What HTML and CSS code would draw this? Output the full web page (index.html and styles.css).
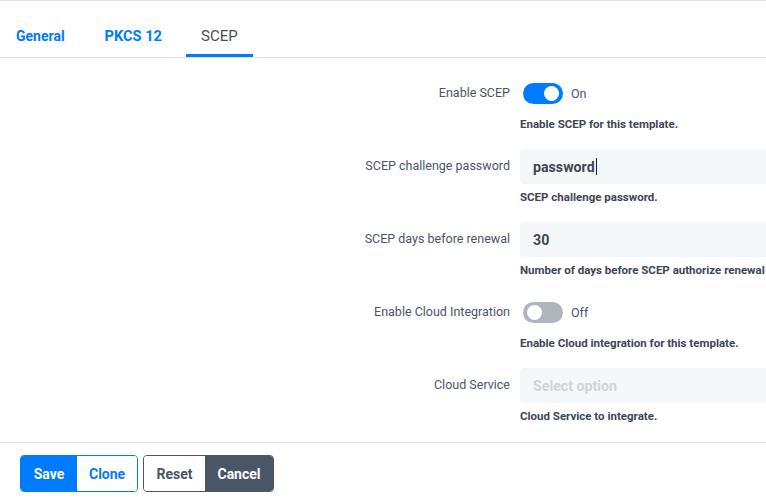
FILE: index.html
```html
<!DOCTYPE html>
<html>
<head>
<meta charset="utf-8">
<link rel="stylesheet" href="styles.css">
</head>
<body>
<div class="page">
  <nav class="tabs">
    <a class="tab">General</a>
    <a class="tab">PKCS 12</a>
    <a class="tab active">SCEP</a>
  </nav>
  <form class="form">
    <div class="field">
      <label class="label">Enable SCEP</label>
      <div class="control">
        <div class="row">
          <span class="switch on"><span class="knob"></span></span>
          <span class="state">On</span>
        </div>
        <div class="help">Enable SCEP for this template.</div>
      </div>
    </div>
    <div class="field">
      <label class="label">SCEP challenge password</label>
      <div class="control">
        <div class="input"><span class="value">password</span><span class="caret"></span></div>
        <div class="help">SCEP challenge password.</div>
      </div>
    </div>
    <div class="field">
      <label class="label">SCEP days before renewal</label>
      <div class="control">
        <div class="input"><span class="value">30</span></div>
        <div class="help">Number of days before SCEP authorize renewal</div>
      </div>
    </div>
    <div class="field">
      <label class="label">Enable Cloud Integration</label>
      <div class="control">
        <div class="row">
          <span class="switch"><span class="knob"></span></span>
          <span class="state">Off</span>
        </div>
        <div class="help">Enable Cloud integration for this template.</div>
      </div>
    </div>
    <div class="field">
      <label class="label">Cloud Service</label>
      <div class="control">
        <div class="input"><span class="placeholder">Select option</span></div>
        <div class="help">Cloud Service to integrate.</div>
      </div>
    </div>
  </form>
  <footer class="footer">
    <div class="group primary">
      <button class="btn save">Save</button>
      <button class="btn clone">Clone</button>
    </div>
    <div class="group dark">
      <button class="btn reset">Reset</button>
      <button class="btn cancel">Cancel</button>
    </div>
  </footer>
</div>
</body>
</html>
```
FILE: styles.css
```css
* { box-sizing: border-box; }
html, body { margin: 0; padding: 0; background: #fff; }
body { font-family: Roboto, "Liberation Sans", sans-serif; color: #4a5568; overflow: hidden; }
.page { width: 766px; border-top: 1px solid #e2e4e6; }

.tabs { display: flex; padding-left: 1px; border-bottom: 1px solid #dfe1e3; height: 57px; }
.tab { display: block; padding: 26px 15px 9px; line-height: 18px; font-size: 14px; font-weight: 700; color: #007bff; border-bottom: 3px solid transparent; height: 56px; }
.tab:nth-child(2) { margin-left: 10px; font-size: 14.6px; }
.tab.active { margin-left: 9px; font-size: 15px; font-weight: 400; color: #495057; border-bottom-color: #007bff; }

.form { padding-top: 18px; }
.field { display: grid; grid-template-columns: 510px 1fr; column-gap: 10px; height: 73px; }
.label { font-size: 12.5px; line-height: 34px; text-align: right; color: #4a5568; }
.control { min-width: 0; }
.row { height: 35px; display: flex; align-items: center; padding-left: 3px; padding-bottom: 1px; }
.switch { width: 40px; height: 21px; border-radius: 11px; background: #adb5bd; position: relative; display: inline-block; }
.switch.on { background: #007bff; }
.knob { position: absolute; top: 3px; left: 4px; width: 15px; height: 15px; border-radius: 50%; background: #fff; }
.switch.on .knob { left: 21px; }
.state { font-size: 12.5px; margin-left: 8px; color: #4a5568; }
.input { height: 35px; background: #f5f8fa; border-radius: 4px 0 0 4px; padding-left: 13px; display: flex; align-items: center; font-size: 14.2px; font-weight: 700; }
.value { color: #3f4650; }
.caret { width: 1px; height: 17px; background: #222; margin-left: 1px; }
.placeholder { color: #cfd4d9; }
.help { margin-top: 6px; font-size: 11.5px; line-height: 14px; font-weight: 700; color: #3d4654; white-space: nowrap; }

.footer { margin-top: 1px; border-top: 1px solid #dfe1e3; padding: 12px 0 0 20px; display: flex; gap: 5px; }
.group { display: flex; border-radius: 4px; border: 1px solid; overflow: hidden; height: 37px; }
.group.primary { border-color: #007bff; }
.group.dark { border-color: #4a5568; }
.btn { font-family: inherit; font-size: 14px; font-weight: 700; border: 0; padding: 0 12px; height: 35px; background: #fff; cursor: pointer; }
.save { background: #007bff; color: #fff; width: 56px; }
.clone { color: #007bff; width: 60px; }
.reset { color: #4a5568; width: 61px; }
.cancel { background: #4a5568; color: #fff; width: 68px; }
```
